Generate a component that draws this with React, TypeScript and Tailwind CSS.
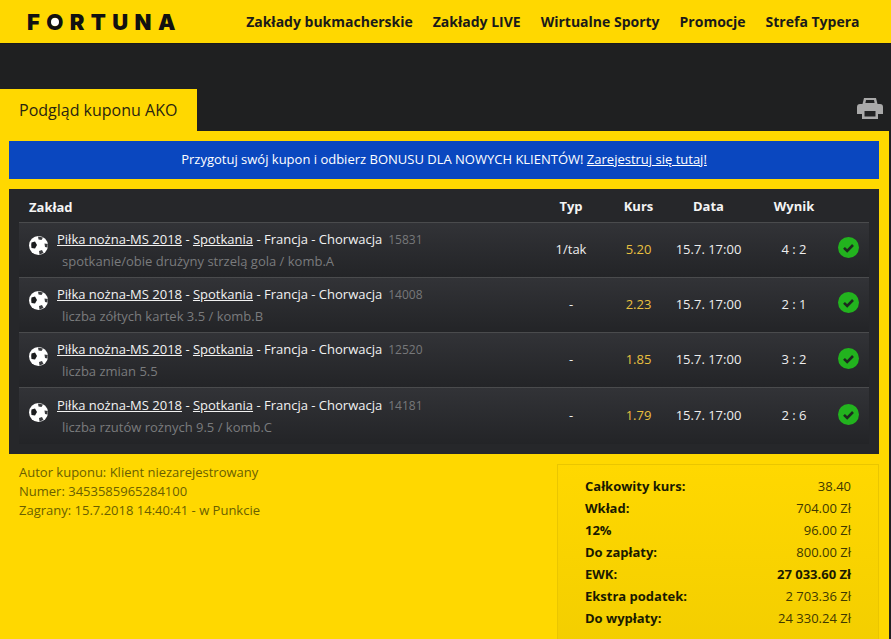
const nav = ["Zakłady bukmacherskie", "Zakłady LIVE", "Wirtualne Sporty", "Promocje", "Strefa Typera"];
const rows = [
  { id: "15831", sub: "spotkanie/obie drużyny strzelą gola / komb.A", typ: "1/tak", kurs: "5.20", wynik: "4 : 2" },
  { id: "14008", sub: "liczba zółtych kartek 3.5 / komb.B", typ: "-", kurs: "2.23", wynik: "2 : 1" },
  { id: "12520", sub: "liczba zmian 5.5", typ: "-", kurs: "1.85", wynik: "3 : 2" },
  { id: "14181", sub: "liczba rzutów rożnych 9.5 / komb.C", typ: "-", kurs: "1.79", wynik: "2 : 6" },
];
const totals = [
  ["Całkowity kurs:", "38.40"],
  ["Wkład:", "704.00 Zł"],
  ["12%", "96.00 Zł"],
  ["Do zapłaty:", "800.00 Zł"],
  ["EWK:", "27 033.60 Zł"],
  ["Ekstra podatek:", "2 703.36 Zł"],
  ["Do wypłaty:", "24 330.24 Zł"],
];

function Ball() {
  return (
    <svg width="19" height="19" viewBox="0 0 19 19" className="shrink-0 -translate-y-[4px]">
      <circle cx="9.5" cy="9.5" r="9.5" fill="#fff" />
      <path d="M2.5 6.5 L6 5.5 L8 9 L6 12.5 L2.5 12 Q1.8 9.5 2.5 6.5Z" fill="#1b1c1e" />
      <path d="M9 0.5 L14 1.5 L12.5 4 L9.5 3.5Z" fill="#3a3b3e" />
      <path d="M15.5 7.5 L18.8 8 L18.5 11.5 L16 11Z" fill="#3a3b3e" />
      <path d="M10 15 L13 14 L14.5 17 L10.5 18.5Z" fill="#3a3b3e" />
    </svg>
  );
}

function Check() {
  return (
    <svg width="21" height="21" viewBox="0 0 21 21" className="shrink-0 -translate-y-[2px]">
      <circle cx="10.5" cy="10.5" r="10.5" fill="#22b31e" />
      <path d="M6 10.8 L9.2 14 L15 8" fill="none" stroke="#1d2a1f" strokeWidth="2.6" />
    </svg>
  );
}

function Printer() {
  return (
    <svg width="26" height="21" viewBox="0 0 26 21">
      <path d="M7 0H19L20.5 6H5.5Z" fill="#a9a9a9" />
      <path d="M9 2H17L17.6 5H8.4Z" fill="#202122" />
      <path d="M3 6H23A3 3 0 0 1 26 9V16H21V11H5V16H0V9A3 3 0 0 1 3 6Z" fill="#a9a9a9" />
      <path d="M5 11H21V21H5Z" fill="#a9a9a9" />
      <path d="M7.5 13H18.5V18.5H7.5Z" fill="#202122" />
    </svg>
  );
}

export default function App() {
  return (
    <div className="w-[891px] h-[639px] overflow-hidden bg-[#1f2021] font-['Open_Sans',sans-serif] text-[13px]">
      <header className="h-11 bg-[#ffd800] flex items-center justify-between pl-[27px] pr-[31.5px] border-b border-[#1a1a1a]">
        <div className="text-[#111] font-['Inter',sans-serif] font-black text-[22px] tracking-[6.4px] leading-none flex items-center">
          <span>F</span>
          <span className="relative">
            O
            <span className="absolute left-[4.5px] top-[7px] w-[8px] h-[8px] rounded-full bg-white"></span>
          </span>
          <span>RTUNA</span>
        </div>
        <nav className="flex gap-5 font-bold text-[14px] text-[#1a1a1a]">
          {nav.map((n) => (
            <span key={n}>{n}</span>
          ))}
        </nav>
      </header>
      <div className="h-[87px] flex items-end justify-between">
        <div className="w-[197px] h-[42px] bg-[#ffd800] pl-[19px] flex items-center text-[16px] text-[#2a2510]">Podgląd kuponu AKO</div>
        <div className="pr-[8px] pb-[12px]">
          <Printer />
        </div>
      </div>
      <main className="w-[889px] h-[508px] bg-[#ffd800] pt-[10px] px-[10px]">
        <div className="h-[38px] w-[870px] -ml-px bg-[#0a47bf] text-white flex items-center justify-center">
          <span>
            Przygotuj swój kupon i odbierz BONUSU DLA NOWYCH KLIENTÓW! <span className="underline">Zarejestruj się tutaj!</span>
          </span>
        </div>
        <div className="w-[870px] -ml-px mt-[10px] h-[265px] bg-[#26272a] px-[10px]">
          <div className="h-[33.5px] flex items-center font-bold text-[#f4f4f4] pl-[10px] pr-px pt-[3px] border-b border-[#4a4b4d]">
            <span className="flex-1 translate-y-px">Zakład</span>
            <span className="w-[94px] text-center">Typ</span>
            <span className="w-[41px] text-center">Kurs</span>
            <span className="w-[99px] text-center">Data</span>
            <span className="w-[72px] text-center">Wynik</span>
            <span className="w-[38px]"></span>
          </div>
          {rows.map((r) => (
            <div key={r.id} className="h-[55.3px] flex items-center pr-px border-b border-[#4a4b4d] last:border-b-0 bg-gradient-to-b from-[#323337] to-[#232427]">
              <div className="flex-1 flex items-center pl-[10px] gap-[9px]">
                <Ball />
                <div>
                  <div className="text-[#f2f2f2] leading-[18px] whitespace-nowrap">
                    <span className="underline">Piłka nożna-MS 2018</span> - <span className="underline">Spotkania</span> - Francja - Chorwacja
                    <span className="text-[#77787a] text-[12px] ml-[6px]">{r.id}</span>
                  </div>
                  <div className="text-[#7a7b7d] leading-[18px] mt-[3px] pl-[5px]">{r.sub}</div>
                </div>
              </div>
              <span className="w-[94px] text-center text-[#eee]">{r.typ}</span>
              <span className="w-[41px] text-center text-[#e9c03f]">{r.kurs}</span>
              <span className="w-[99px] text-center text-[#eee] whitespace-nowrap">15.7. 17:00</span>
              <span className="w-[72px] text-center text-[#eee]">{r.wynik}</span>
              <span className="w-[38px] flex justify-center -translate-x-[1px]">
                <Check />
              </span>
            </div>
          ))}
        </div>
        <div className="flex justify-between mt-[8px]">
          <div className="text-[#6a5f00] leading-[19px] pl-[9px] pt-[1px]">
            <div>Autor kuponu: Klient niezarejestrowany</div>
            <div>Numer: 3453585965284100</div>
            <div>Zagrany: 15.7.2018 14:40:41 - w Punkcie</div>
          </div>
          <div className="w-[322px] h-[200px] mt-[2px] border border-[#eac600] bg-gradient-to-b from-[#ffd800] to-[#f2cd00] px-[27px] pt-[10px] leading-[22px]">
            {totals.map(([k, v]) => (
              <div key={k} className="flex justify-between text-[#1a1a00]">
                <span className="font-bold">{k}</span>
                <span className={k === "EWK:" ? "font-bold" : "text-[#3f3900]"}>{v}</span>
              </div>
            ))}
          </div>
        </div>
      </main>
    </div>
  );
}
